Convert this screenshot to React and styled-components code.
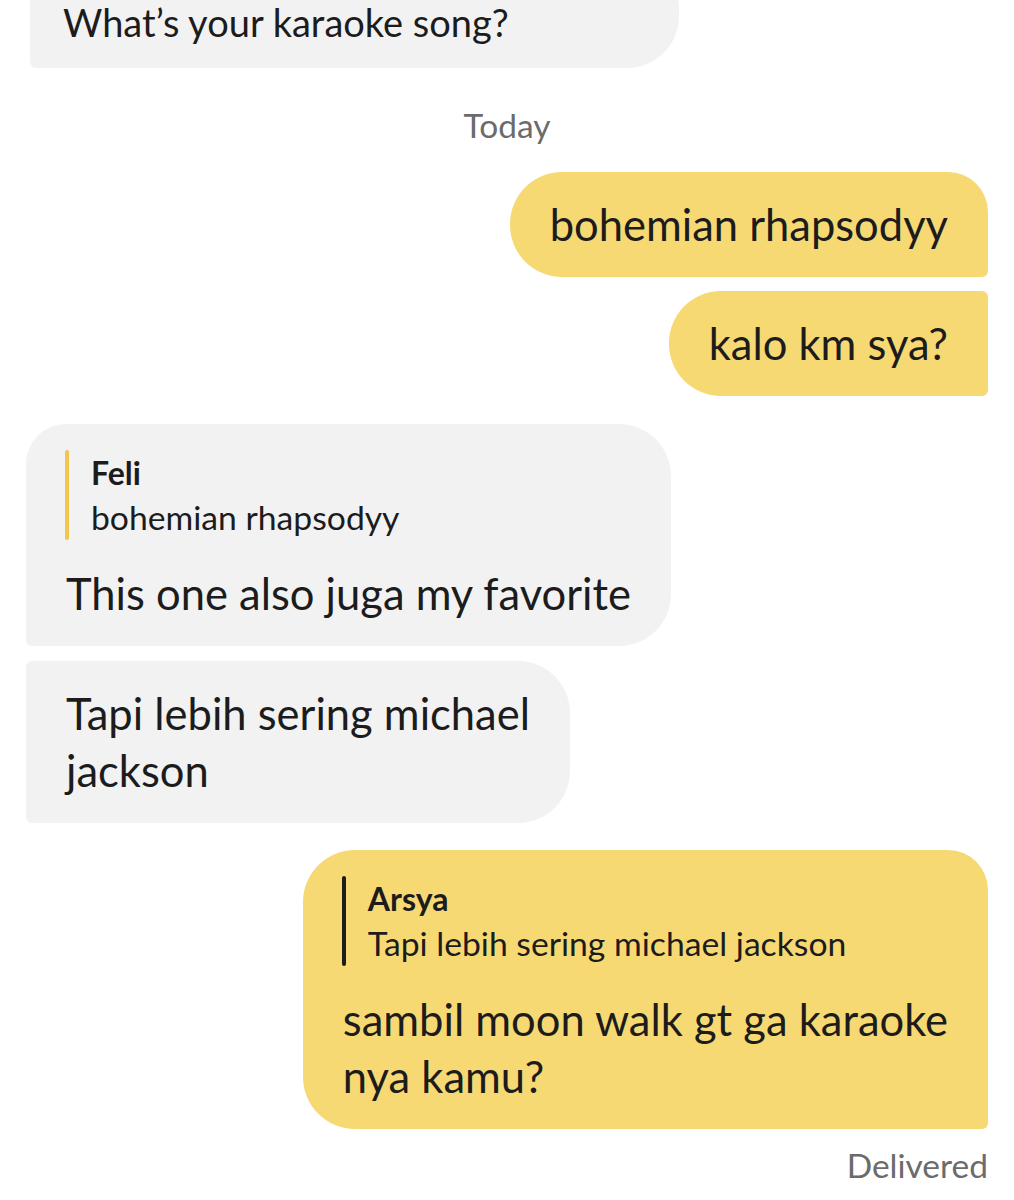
import React from "react";
import styled, { createGlobalStyle, css } from "styled-components";

const Global = createGlobalStyle`
  html, body { margin: 0; padding: 0; background: #ffffff; }
  body { font-family: Lato, "Liberation Sans", sans-serif; color: #1c1c1c; }
`;

const Page = styled.div`
  width: 1014px;
  height: 1200px;
  overflow: hidden;
  background: #ffffff;
`;

const Thread = styled.div`
  display: flex;
  flex-direction: column;
  padding: 0 26px;
  margin-top: -43px;
`;

const Row = styled.div`
  display: flex;
  justify-content: ${(p) => (p.$side === "out" ? "flex-end" : "flex-start")};
  margin-top: ${(p) => p.$space || 0}px;
  padding-left: ${(p) => p.$indent || 0}px;
`;

const Bubble = styled.div`
  box-sizing: border-box;
  padding: 24px 40px;
  font-size: 43.5px;
  line-height: 57px;
  color: #1c1c1c;
  ${(p) =>
    p.$side === "out"
      ? css`
          background: #f7d974;
          border-radius: 52px ${p.$first ? 40 : 6}px 6px 52px;
        `
      : css`
          background: #f2f2f2;
          border-radius: ${p.$first ? 40 : 6}px 52px 52px 6px;
        `}
`;

const PromptBubble = styled(Bubble)`
  padding: 40px 170px 21px 33px;
  font-size: 38px;
  line-height: 50px;
`;

const Quote = styled.div`
  display: flex;
  align-items: stretch;
  gap: 22px;
  margin: 2px 0 25px -1px;
`;

const QuoteBar = styled.div`
  flex: 0 0 4px;
  border-radius: 2px;
  background: ${(p) => (p.$side === "out" ? "#1c1c1c" : "#f3c54c")};
`;

const QuoteBody = styled.div`
  display: flex;
  flex-direction: column;
`;

const QuoteName = styled.div`
  font-size: 32px;
  line-height: 45px;
  font-weight: 700;
`;

const QuoteText = styled.div`
  font-size: 33.7px;
  line-height: 45px;
`;

const Stamp = styled.div`
  font-size: 33.5px;
  line-height: 40px;
  color: #6b6b6b;
  text-align: ${(p) => p.$align || "center"};
  margin-top: ${(p) => p.$space || 0}px;
`;

function Reply({ side, name, text }) {
  return (
    <Quote>
      <QuoteBar $side={side} />
      <QuoteBody>
        <QuoteName>{name}</QuoteName>
        <QuoteText>{text}</QuoteText>
      </QuoteBody>
    </Quote>
  );
}

export default function App() {
  return (
    <Page>
      <Global />
      <Thread>
        <Row $side="in" $indent={4}>
          <PromptBubble $side="in" $first>
            What’s your karaoke song?
          </PromptBubble>
        </Row>
        <Stamp $space={37}>Today</Stamp>
        <Row $side="out" $space={27}>
          <Bubble $side="out" $first>bohemian rhapsodyy</Bubble>
        </Row>
        <Row $side="out" $space={14}>
          <Bubble $side="out">kalo km sya?</Bubble>
        </Row>
        <Row $side="in" $space={28}>
          <Bubble $side="in" $first>
            <Reply side="in" name="Feli" text="bohemian rhapsodyy" />
            This one also juga my favorite
          </Bubble>
        </Row>
        <Row $side="in" $space={15}>
          <Bubble $side="in">
            Tapi lebih sering michael
            <br />
            jackson
          </Bubble>
        </Row>
        <Row $side="out" $space={27}>
          <Bubble $side="out" $first>
            <Reply side="out" name="Arsya" text="Tapi lebih sering michael jackson" />
            sambil moon walk gt ga karaoke
            <br />
            nya kamu?
          </Bubble>
        </Row>
        <Stamp $align="right" $space={16}>Delivered</Stamp>
      </Thread>
    </Page>
  );
}
